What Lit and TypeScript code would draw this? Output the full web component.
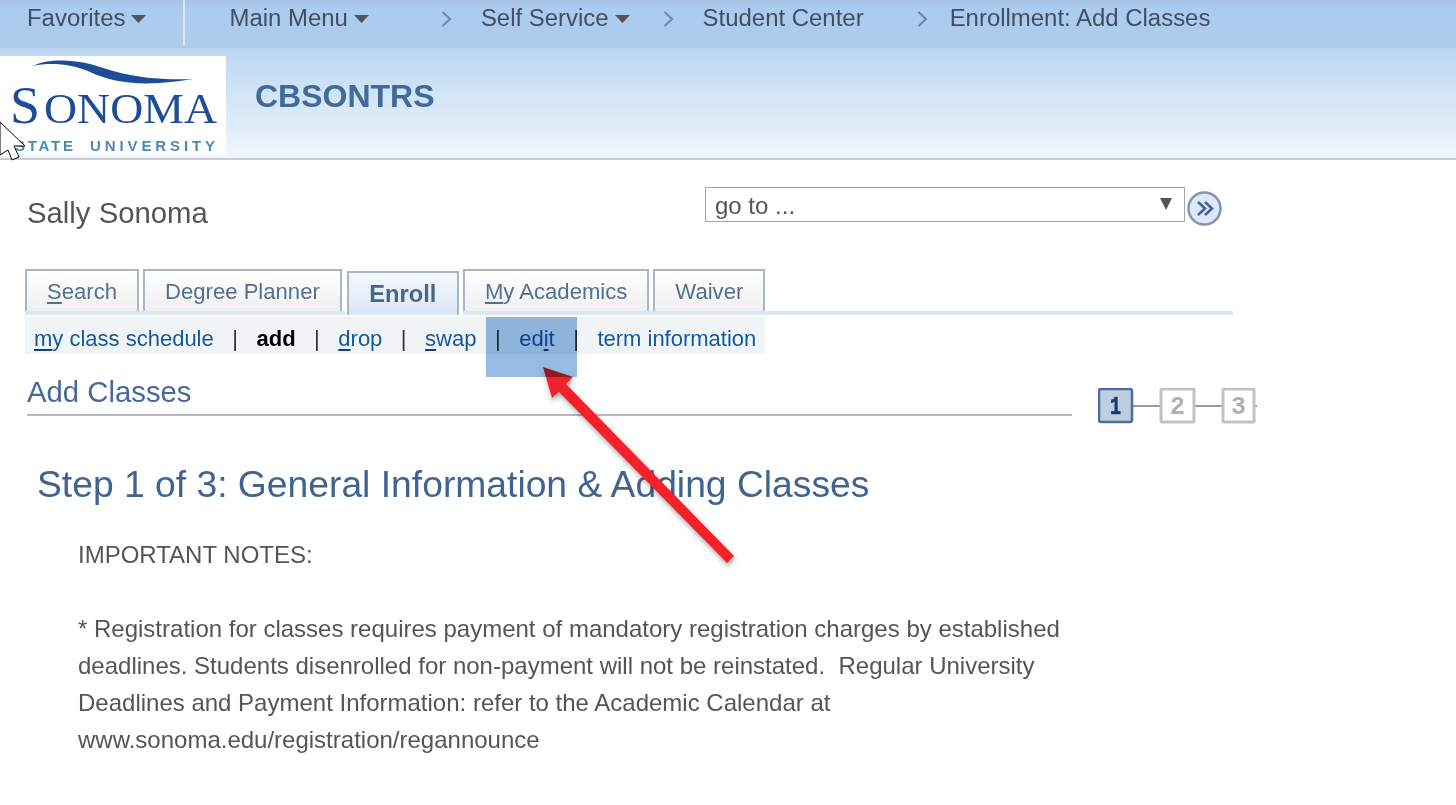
import { LitElement, html, css } from 'lit';
import { customElement } from 'lit/decorators.js';

const caret = html`<svg class="caret" width="15" height="8" viewBox="0 0 15 8"><path d="M0 0H15L7.5 8Z" fill="#555"/></svg>`;
const chevron = html`<svg class="chev" width="11" height="16" viewBox="0 0 11 16"><path d="M1.5 1L9 8L1.5 15" fill="none" stroke="#6d87a8" stroke-width="2"/></svg>`;

@customElement('app-root')
export class AppRoot extends LitElement {
  static styles = css`
    :host {
      display: block;
      position: relative;
      width: 1456px;
      height: 805px;
      overflow: hidden;
      background: #fff;
      font-family: 'Liberation Sans', Arial, sans-serif;
      color: #555;
    }

    /* top nav */
    .topbar {
      height: 48px;
      display: flex;
      align-items: flex-start;
      padding-left: 27px;
      box-sizing: border-box;
      background: linear-gradient(#a7c3e4 0, #abcbef 8px, #aecbea 100%);
      font-size: 23.95px;
      color: #3f4f66;
    }
    .topbar span { line-height: 36px; white-space: nowrap; }
    .caret { margin: 15px 0 0 6px; flex: none; }
    .chev { margin-top: 11px; flex: none; }
    .divider { width: 2px; height: 45px; background: #dce8f5; margin: 0 44px 0 37px; flex: none; }
    .ml72 { margin-left: 72px; }
    .ml33 { margin-left: 33px; }
    .ml53 { margin-left: 53px; }
    .mr29 { margin-right: 29px; }
    .mr22 { margin-right: 22px; }

    /* logo band */
    .banner {
      height: 112px;
      box-sizing: border-box;
      display: flex;
      align-items: flex-start;
      padding-top: 8px;
      border-bottom: 2px solid #c8ccd4;
      background: linear-gradient(#bcd7f1, #f0f6fd);
    }
    .logo { width: 226px; height: 100px; background: #fff; flex: none; display: block; }
    .logo g { filter: blur(0.5px); }
    .logo-big { font-family: 'Liberation Serif', serif; fill: #1c4d96; }
    .logo-sub { font-family: 'Liberation Sans', sans-serif; font-weight: 700; fill: #4b8bb0; }
    .banner h1 {
      margin: 20px 0 0 29px;
      font-size: 32px;
      line-height: 40px;
      font-weight: 700;
      color: #41699a;
    }

    /* content */
    .content { padding-left: 25px; width: 1208px; }
    .who { display: flex; align-items: flex-start; margin-top: 27px; height: 82px; }
    .name { width: 680px; padding: 8px 0 0 2px; box-sizing: border-box; font-size: 29.3px; line-height: 36px; }
    .goto {
      width: 480px;
      height: 35px;
      box-sizing: border-box;
      border: 1px solid #a5a5a5;
      padding-left: 9px;
      font-size: 24px;
      line-height: 35px;
      display: flex;
      justify-content: space-between;
    }
    .goto svg { margin: 10px 12px 0 0; }
    .go { margin: 4px 0 0 2px; }

    .tabs { display: flex; height: 42px; border-bottom: 4px solid #dbe6f5; }
    .tab {
      box-sizing: border-box;
      height: 42px;
      padding: 0 20px;
      border: 2px solid #a9b6c9;
      border-bottom: 0;
      background: linear-gradient(#fff, #efefef);
      margin-right: 4px;
      font-size: 22.1px;
      line-height: 41px;
      color: #54708f;
      white-space: nowrap;
    }
    .tab.active {
      height: 44px;
      margin: 2px 4px 0 1px;
      padding: 0 20.5px;
      background: linear-gradient(#f4f8fe, #dbe6f5);
      font-size: 23.7px;
      font-weight: 700;
      line-height: 43px;
      color: #476789;
      position: relative;
      box-shadow: -2px 0 0 #fff, 4px 0 0 #fff;
    }
    .tab u { text-underline-offset: 3px; }

    .subnav {
      display: inline-flex;
      gap: 18.5px;
      margin-top: 2px;
      height: 37px;
      box-sizing: border-box;
      padding: 3px 9px 0;
      background: #f0f4f6;
      font-size: 22px;
      line-height: 37px;
      white-space: nowrap;
      vertical-align: top;
    }
    .subnav a { color: #14599c; text-decoration: none; }
    .subnav u { text-decoration-color: #0b3f8f; text-underline-offset: 3px; }
    .subnav b { color: #000; }
    .subnav .sep { color: #333; }

    .title-row { display: flex; align-items: flex-start; margin-top: 21px; }
    .title {
      margin: 0 0 0 2px;
      width: 1045px;
      flex: none;
      height: 41px;
      box-sizing: border-box;
      border-bottom: 2px solid #b8b8b8;
      font-size: 29.3px;
      font-weight: 400;
      line-height: 34px;
      color: #46689a;
    }
    .steps { margin: 13px 0 0 26px; display: block; flex: none; filter: blur(0.4px); }
    .step-n { font-family: 'Liberation Mono', monospace; font-weight: 700; font-size: 25px; stroke-width: 0.7px; }

    h2 {
      margin: 36px 0 0 12px;
      font-size: 37.25px;
      line-height: 46px;
      font-weight: 400;
      color: #41638f;
      white-space: nowrap;
    }
    .notes {
      margin: 29px 0 0 53px;
      font-size: 24px;
      line-height: 37px;
      color: #555;
      white-space: pre;
    }

    /* annotations lying over the page */
    .arrow { position: absolute; left: 530px; top: 355px; overflow: visible; }
    .hilite { position: absolute; left: 486px; top: 317px; width: 91px; height: 60px; background: #97bce4; mix-blend-mode: multiply; }
    .cursor { position: absolute; left: 0; top: 122px; }
  `;

  render() {
    return html`
      <div class="topbar">
        <span>Favorites</span>${caret}
        <div class="divider"></div>
        <span>Main Menu</span>${caret}
        <div class="ml72 mr29">${chevron}</div>
        <span>Self Service</span>${caret}
        <div class="ml33 mr29">${chevron}</div>
        <span>Student Center</span>
        <div class="ml53 mr22">${chevron}</div>
        <span>Enrollment: Add Classes</span>
      </div>

      <div class="banner">
        <svg class="logo" viewBox="0 0 226 100">
          <g>
            <path d="M33 10C46 3 70 3 90 8C112 14 134 25 193 23C140 32 112 26 90 16C72 8 50 6 33 10Z" fill="#1c4d96"/>
            <text class="logo-big" x="10" y="67" font-size="53" textLength="30" lengthAdjust="spacingAndGlyphs">S</text>
            <text class="logo-big" x="44" y="67" font-size="42" textLength="173" lengthAdjust="spacingAndGlyphs">ONOMA</text>
            <text class="logo-sub" x="15" y="95" font-size="15" textLength="58">STATE</text>
            <text class="logo-sub" x="90" y="95" font-size="15" textLength="125">UNIVERSITY</text>
          </g>
        </svg>
        <h1>CBSONTRS</h1>
      </div>

      <div class="content">
        <div class="who">
          <div class="name">Sally Sonoma</div>
          <div class="goto">
            <span>go to ...</span>
            <svg width="12" height="12" viewBox="0 0 12 12"><path d="M0 0H12L6 12Z" fill="#555"/></svg>
          </div>
          <svg class="go" width="35" height="35" viewBox="0 0 35 35">
            <circle cx="17.5" cy="17.5" r="16" fill="#dde9fb" stroke="#8a93a6" stroke-width="2.5"/>
            <path d="M11 11L18 17.5L11 24M18 11L25 17.5L18 24" fill="none" stroke="#47609f" stroke-width="2.6"/>
          </svg>
        </div>

        <div class="tabs">
          <div class="tab"><u>S</u>earch</div>
          <div class="tab">Degree Planner</div>
          <div class="tab active">Enroll</div>
          <div class="tab"><u>M</u>y Academics</div>
          <div class="tab">Waiver</div>
        </div>

        <div class="subnav">
          <a href="#"><u>m</u>y class schedule</a><span class="sep">|</span>
          <b>add</b><span class="sep">|</span>
          <a href="#"><u>d</u>rop</a><span class="sep">|</span>
          <a href="#"><u>s</u>wap</a><span class="sep">|</span>
          <a href="#">ed<u>i</u>t</a><span class="sep">|</span>
          <a href="#">term information</a>
        </div>

        <div class="title-row">
          <h3 class="title">Add Classes</h3>
          <svg class="steps" width="160" height="37" viewBox="0 0 160 37">
            <path d="M35 18H62M97 18H124M157 18H159" stroke="#999" stroke-width="2"/>
            <rect x="1" y="1" width="33" height="33" rx="2" fill="#bccfe0" stroke="#506aa3" stroke-width="2.5"/>
            <text class="step-n" x="12" y="26" textLength="11" lengthAdjust="spacingAndGlyphs" fill="#1f3a72" stroke="#1f3a72">1</text>
            <rect x="63" y="1" width="33" height="33" rx="1" fill="#fff" stroke="#c2c2c2" stroke-width="3"/>
            <text class="step-n" x="72" y="26" textLength="15" lengthAdjust="spacingAndGlyphs" fill="#b0b0b0">2</text>
            <rect x="125" y="1" width="31" height="33" rx="1" fill="#fff" stroke="#c2c2c2" stroke-width="3"/>
            <text class="step-n" x="133" y="26" textLength="15" lengthAdjust="spacingAndGlyphs" fill="#b0b0b0">3</text>
          </svg>
        </div>

        <h2>Step 1 of 3: General Information &amp; Adding Classes</h2>
        <div class="notes">IMPORTANT NOTES:

* Registration for classes requires payment of mandatory registration charges by established
deadlines. Students disenrolled for non-payment will not be reinstated.  Regular University
Deadlines and Payment Information: refer to the Academic Calendar at
www.sonoma.edu/registration/regannounce</div>
      </div>

      <svg class="arrow" width="210" height="215" viewBox="530 355 210 215">
        <defs>
          <filter id="sh" x="-20%" y="-20%" width="140%" height="140%">
            <feDropShadow dx="1" dy="3" stdDeviation="2.5" flood-color="#000" flood-opacity="0.35"/>
          </filter>
        </defs>
        <path d="M543 367L573 377L566 384L734 556L727 563L559 392L552 398Z" fill="#f3222b" filter="url(#sh)"/>
      </svg>
      <div class="hilite"></div>

      <svg class="cursor" width="26" height="40" viewBox="0 0 26 40">
        <path d="M0 0L25 24H14L19 35L12 38L8 28L0 33Z" fill="#fff" stroke="#000" stroke-width="1"/>
      </svg>
    `;
  }
}
